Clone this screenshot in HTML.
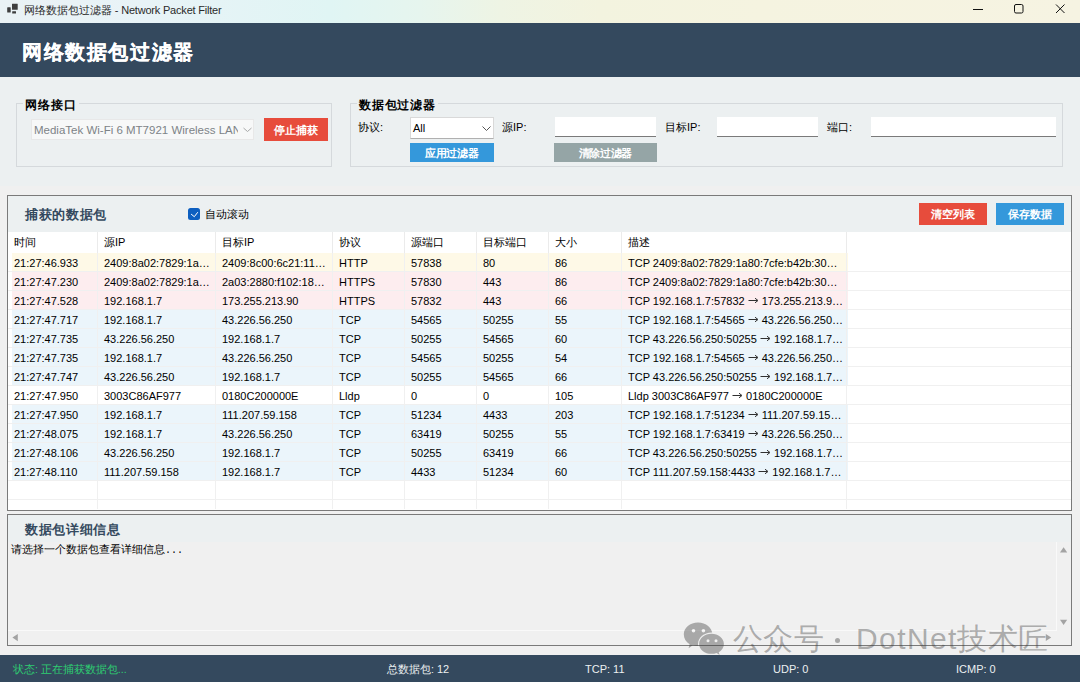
<!DOCTYPE html>
<html><head><meta charset="utf-8">
<style>
*{margin:0;padding:0;box-sizing:border-box}
html,body{width:1080px;height:682px;overflow:hidden}
body{position:relative;background:#f0f0f0;font-family:"Liberation Sans",sans-serif;color:#000}
.a{position:absolute;white-space:nowrap}
#tb{left:0;top:0;width:1080px;height:23px;background:linear-gradient(90deg,#eaf2f5 0px,#e8f3f7 150px,#e0f5f4 330px,#e6f5ee 420px,#eef4e4 500px,#f3f3df 600px,#f5f3e0 760px,#f6f3e2 1080px)}
#hdr{left:0;top:23px;width:1080px;height:54px;background:#34495e}
.gb{border:1px solid #d5d9dc}
.lbl{font-size:11px;line-height:14px}
.btn{color:#fff;font-size:11px;text-align:center;font-weight:bold;letter-spacing:-0.3px;text-indent:-0.3px}
.tbx{background:#fff;border-bottom:1px solid #7a7a7a}
#grid .row{position:absolute;left:12px;height:18px;font-size:11px;line-height:18px}
.gh{font-size:11px;line-height:14px;color:#000}
.gc{font-size:11px;line-height:18px;color:#000}
.arw{vertical-align:0}
.wm{font-size:30px;line-height:44px;color:rgba(60,60,60,0.4)}
#status{left:0;top:655px;width:1080px;height:27px;background:#34495e}
.st{font-size:11px;color:#ecf0f1;top:662px;line-height:14px}
</style></head><body>
<!-- title bar -->
<div id="tb" class="a"></div>
<svg class="a" style="left:0;top:0" width="20" height="16" viewBox="0 0 20 16">
<rect x="7.2" y="7.2" width="3.5" height="5.4" rx="0.6" fill="#3e3e3e"/><rect x="12" y="3.7" width="5.7" height="6" rx="0.3" fill="#3e3e3e"/><rect x="12.2" y="11.3" width="3.8" height="2.2" rx="0.3" fill="#3e3e3e"/>
</svg>
<div class="a" style="left:24px;top:3px;font-size:11px;line-height:15px;color:#2a2a2a">网络数据包过滤器<span style="letter-spacing:-0.2px"> - Network Packet Filter</span></div>
<svg class="a" style="left:960px;top:0" width="120" height="23" viewBox="0 0 120 23">
<line x1="13" y1="9.5" x2="23" y2="9.5" stroke="#111" stroke-width="1"/>
<rect x="54.5" y="4.5" width="8.5" height="8.5" rx="1.5" fill="none" stroke="#111" stroke-width="1"/>
<path d="M96 4.5 L104.5 13 M104.5 4.5 L96 13" stroke="#111" stroke-width="1"/>
</svg>
<!-- header -->
<div id="hdr" class="a"></div>
<div class="a" style="left:0;top:77px;width:1080px;height:109px;background:#ecf0f1"></div>
<div class="a" style="left:22px;top:38px;font-size:19.5px;line-height:28px;font-weight:bold;-webkit-text-stroke:0.25px #fff;color:#fff;letter-spacing:1.6px">网络数据包过滤器</div>

<!-- group 1 -->
<div class="a gb" style="left:16px;top:103px;width:316px;height:64px"></div>
<div class="a" style="left:23px;top:97px;background:#ecf0f1;padding:0 2px;font-size:12px;line-height:16px;font-weight:bold;letter-spacing:1.1px">网络接口</div>
<div class="a" style="left:31px;top:119px;width:223px;height:21px;background:#f7f8f8;border:1px solid #e8e8e8"></div>
<div class="a" style="left:34px;top:123px;font-size:11.5px;line-height:15px;color:#7d8387;width:204px;overflow:hidden">MediaTek Wi-Fi 6 MT7921 Wireless LAN</div>
<svg class="a" style="left:242px;top:126px" width="11" height="7" viewBox="0 0 11 7"><path d="M1.5 2 L5.5 5.5 L9.5 2" fill="none" stroke="#a8a8a8" stroke-width="1"/></svg>
<div class="a btn" style="left:264px;top:118px;width:64px;height:23px;line-height:24px;background:#e74c3c">停止捕获</div>

<!-- group 2 -->
<div class="a gb" style="left:350px;top:103px;width:713px;height:64px"></div>
<div class="a" style="left:357px;top:97px;background:#ecf0f1;padding:0 2px;font-size:12px;line-height:16px;font-weight:bold;letter-spacing:0.8px">数据包过滤器</div>
<div class="a lbl" style="left:358px;top:120px">协议:</div>
<div class="a" style="left:410px;top:117px;width:84px;height:22px;background:#fff;border:1px solid #d9d9d9;border-bottom-color:#b0b0b0"></div>
<div class="a lbl" style="left:413px;top:121px">All</div>
<svg class="a" style="left:481px;top:125px" width="11" height="7" viewBox="0 0 11 7"><path d="M1.5 1.5 L5.5 5.5 L9.5 1.5" fill="none" stroke="#555" stroke-width="1"/></svg>
<div class="a lbl" style="left:502px;top:120px">源IP:</div>
<div class="a tbx" style="left:555px;top:117px;width:101px;height:20px"></div>
<div class="a lbl" style="left:665px;top:120px">目标IP:</div>
<div class="a tbx" style="left:717px;top:117px;width:101px;height:20px"></div>
<div class="a lbl" style="left:827px;top:120px">端口:</div>
<div class="a tbx" style="left:871px;top:117px;width:185px;height:20px"></div>
<div class="a btn" style="left:410px;top:143px;width:84px;height:19px;line-height:20px;font-size:11px;font-weight:bold;background:#3498db">应用过滤器</div>
<div class="a btn" style="left:554px;top:143px;width:103px;height:19px;line-height:20px;font-size:11px;font-weight:bold;background:#95a5a6">清除过滤器</div>

<!-- packets panel -->
<div class="a" style="left:7px;top:195px;width:1065px;height:316px;border:1px solid #7a7a7a;background:#fff"></div>
<div class="a" style="left:8px;top:196px;width:1063px;height:36px;background:#ecf0f1"></div>
<div class="a" style="left:25px;top:206px;font-size:13px;letter-spacing:0.7px;line-height:17px;font-weight:bold;color:#34495e">捕获的数据包</div>
<div class="a" style="left:188px;top:208px;width:12px;height:12px;border-radius:2.5px;background:#0d5fc0"></div>
<svg class="a" style="left:188px;top:208px" width="12" height="12" viewBox="0 0 12 12"><path d="M3.1 6.1 L6.3 8.7 L9.8 4.2" fill="none" stroke="#fff" stroke-width="1"/></svg>
<div class="a" style="left:205px;top:207px;font-size:11px;line-height:14px">自动滚动</div>
<div class="a btn" style="left:919px;top:203px;width:68px;height:22px;line-height:23px;background:#e74c3c">清空列表</div>
<div class="a btn" style="left:996px;top:203px;width:68px;height:22px;line-height:23px;background:#3498db">保存数据</div>

<div id="grid">
<div class="a" style="left:8px;top:232px;width:1063px;height:21px;background:#fff"></div>
<div class="a gh" style="left:14px;top:235px">时间</div>
<div class="a gh" style="left:104px;top:235px">源IP</div>
<div class="a gh" style="left:222px;top:235px">目标IP</div>
<div class="a gh" style="left:339px;top:235px">协议</div>
<div class="a gh" style="left:411px;top:235px">源端口</div>
<div class="a gh" style="left:483px;top:235px">目标端口</div>
<div class="a gh" style="left:555px;top:235px">大小</div>
<div class="a gh" style="left:628px;top:235px">描述</div>
<div class="a" style="left:97px;top:232px;width:1px;height:21px;background:#ebebeb"></div>
<div class="a" style="left:215px;top:232px;width:1px;height:21px;background:#ebebeb"></div>
<div class="a" style="left:332px;top:232px;width:1px;height:21px;background:#ebebeb"></div>
<div class="a" style="left:404px;top:232px;width:1px;height:21px;background:#ebebeb"></div>
<div class="a" style="left:476px;top:232px;width:1px;height:21px;background:#ebebeb"></div>
<div class="a" style="left:548px;top:232px;width:1px;height:21px;background:#ebebeb"></div>
<div class="a" style="left:621px;top:232px;width:1px;height:21px;background:#ebebeb"></div>
<div class="a" style="left:846px;top:232px;width:1px;height:21px;background:#ebebeb"></div>
<div class="a" style="left:12px;top:253px;width:836px;height:18px;background:#fef9e7"></div>
<div class="a gc" style="left:14px;top:254px">21:27:46.933</div>
<div class="a gc" style="left:104px;top:254px">2409:8a02:7829:1a…</div>
<div class="a gc" style="left:222px;top:254px">2409:8c00:6c21:11…</div>
<div class="a gc" style="left:339px;top:254px">HTTP</div>
<div class="a gc" style="left:411px;top:254px">57838</div>
<div class="a gc" style="left:483px;top:254px">80</div>
<div class="a gc" style="left:555px;top:254px">86</div>
<div class="a gc" style="left:628px;top:254px">TCP 2409:8a02:7829:1a80:7cfe:b42b:30…</div>
<div class="a" style="left:12px;top:272px;width:836px;height:18px;background:#fdedef"></div>
<div class="a gc" style="left:14px;top:273px">21:27:47.230</div>
<div class="a gc" style="left:104px;top:273px">2409:8a02:7829:1a…</div>
<div class="a gc" style="left:222px;top:273px">2a03:2880:f102:18…</div>
<div class="a gc" style="left:339px;top:273px">HTTPS</div>
<div class="a gc" style="left:411px;top:273px">57830</div>
<div class="a gc" style="left:483px;top:273px">443</div>
<div class="a gc" style="left:555px;top:273px">86</div>
<div class="a gc" style="left:628px;top:273px">TCP 2409:8a02:7829:1a80:7cfe:b42b:30…</div>
<div class="a" style="left:12px;top:291px;width:836px;height:18px;background:#fdedef"></div>
<div class="a gc" style="left:14px;top:292px">21:27:47.528</div>
<div class="a gc" style="left:104px;top:292px">192.168.1.7</div>
<div class="a gc" style="left:222px;top:292px">173.255.213.90</div>
<div class="a gc" style="left:339px;top:292px">HTTPS</div>
<div class="a gc" style="left:411px;top:292px">57832</div>
<div class="a gc" style="left:483px;top:292px">443</div>
<div class="a gc" style="left:555px;top:292px">66</div>
<div class="a gc" style="left:628px;top:292px">TCP 192.168.1.7:57832 <svg class="arw" width="11" height="8" viewBox="0 0 11 8"><path d="M0.5 3.5 H9.3" stroke="#303030" stroke-width="1"/><path d="M7 1.2 L10 3.5 L7 5.8" fill="none" stroke="#303030" stroke-width="1"/></svg> 173.255.213.9…</div>
<div class="a" style="left:12px;top:310px;width:836px;height:18px;background:#ebf5fb"></div>
<div class="a gc" style="left:14px;top:311px">21:27:47.717</div>
<div class="a gc" style="left:104px;top:311px">192.168.1.7</div>
<div class="a gc" style="left:222px;top:311px">43.226.56.250</div>
<div class="a gc" style="left:339px;top:311px">TCP</div>
<div class="a gc" style="left:411px;top:311px">54565</div>
<div class="a gc" style="left:483px;top:311px">50255</div>
<div class="a gc" style="left:555px;top:311px">55</div>
<div class="a gc" style="left:628px;top:311px">TCP 192.168.1.7:54565 <svg class="arw" width="11" height="8" viewBox="0 0 11 8"><path d="M0.5 3.5 H9.3" stroke="#303030" stroke-width="1"/><path d="M7 1.2 L10 3.5 L7 5.8" fill="none" stroke="#303030" stroke-width="1"/></svg> 43.226.56.250…</div>
<div class="a" style="left:12px;top:329px;width:836px;height:18px;background:#ebf5fb"></div>
<div class="a gc" style="left:14px;top:330px">21:27:47.735</div>
<div class="a gc" style="left:104px;top:330px">43.226.56.250</div>
<div class="a gc" style="left:222px;top:330px">192.168.1.7</div>
<div class="a gc" style="left:339px;top:330px">TCP</div>
<div class="a gc" style="left:411px;top:330px">50255</div>
<div class="a gc" style="left:483px;top:330px">54565</div>
<div class="a gc" style="left:555px;top:330px">60</div>
<div class="a gc" style="left:628px;top:330px">TCP 43.226.56.250:50255 <svg class="arw" width="11" height="8" viewBox="0 0 11 8"><path d="M0.5 3.5 H9.3" stroke="#303030" stroke-width="1"/><path d="M7 1.2 L10 3.5 L7 5.8" fill="none" stroke="#303030" stroke-width="1"/></svg> 192.168.1.7…</div>
<div class="a" style="left:12px;top:348px;width:836px;height:18px;background:#ebf5fb"></div>
<div class="a gc" style="left:14px;top:349px">21:27:47.735</div>
<div class="a gc" style="left:104px;top:349px">192.168.1.7</div>
<div class="a gc" style="left:222px;top:349px">43.226.56.250</div>
<div class="a gc" style="left:339px;top:349px">TCP</div>
<div class="a gc" style="left:411px;top:349px">54565</div>
<div class="a gc" style="left:483px;top:349px">50255</div>
<div class="a gc" style="left:555px;top:349px">54</div>
<div class="a gc" style="left:628px;top:349px">TCP 192.168.1.7:54565 <svg class="arw" width="11" height="8" viewBox="0 0 11 8"><path d="M0.5 3.5 H9.3" stroke="#303030" stroke-width="1"/><path d="M7 1.2 L10 3.5 L7 5.8" fill="none" stroke="#303030" stroke-width="1"/></svg> 43.226.56.250…</div>
<div class="a" style="left:12px;top:367px;width:836px;height:18px;background:#ebf5fb"></div>
<div class="a gc" style="left:14px;top:368px">21:27:47.747</div>
<div class="a gc" style="left:104px;top:368px">43.226.56.250</div>
<div class="a gc" style="left:222px;top:368px">192.168.1.7</div>
<div class="a gc" style="left:339px;top:368px">TCP</div>
<div class="a gc" style="left:411px;top:368px">50255</div>
<div class="a gc" style="left:483px;top:368px">54565</div>
<div class="a gc" style="left:555px;top:368px">66</div>
<div class="a gc" style="left:628px;top:368px">TCP 43.226.56.250:50255 <svg class="arw" width="11" height="8" viewBox="0 0 11 8"><path d="M0.5 3.5 H9.3" stroke="#303030" stroke-width="1"/><path d="M7 1.2 L10 3.5 L7 5.8" fill="none" stroke="#303030" stroke-width="1"/></svg> 192.168.1.7…</div>
<div class="a" style="left:12px;top:386px;width:836px;height:18px;background:#ffffff"></div>
<div class="a gc" style="left:14px;top:387px">21:27:47.950</div>
<div class="a gc" style="left:104px;top:387px">3003C86AF977</div>
<div class="a gc" style="left:222px;top:387px">0180C200000E</div>
<div class="a gc" style="left:339px;top:387px">Lldp</div>
<div class="a gc" style="left:411px;top:387px">0</div>
<div class="a gc" style="left:483px;top:387px">0</div>
<div class="a gc" style="left:555px;top:387px">105</div>
<div class="a gc" style="left:628px;top:387px">Lldp 3003C86AF977 <svg class="arw" width="11" height="8" viewBox="0 0 11 8"><path d="M0.5 3.5 H9.3" stroke="#303030" stroke-width="1"/><path d="M7 1.2 L10 3.5 L7 5.8" fill="none" stroke="#303030" stroke-width="1"/></svg> 0180C200000E</div>
<div class="a" style="left:12px;top:405px;width:836px;height:18px;background:#ebf5fb"></div>
<div class="a gc" style="left:14px;top:406px">21:27:47.950</div>
<div class="a gc" style="left:104px;top:406px">192.168.1.7</div>
<div class="a gc" style="left:222px;top:406px">111.207.59.158</div>
<div class="a gc" style="left:339px;top:406px">TCP</div>
<div class="a gc" style="left:411px;top:406px">51234</div>
<div class="a gc" style="left:483px;top:406px">4433</div>
<div class="a gc" style="left:555px;top:406px">203</div>
<div class="a gc" style="left:628px;top:406px">TCP 192.168.1.7:51234 <svg class="arw" width="11" height="8" viewBox="0 0 11 8"><path d="M0.5 3.5 H9.3" stroke="#303030" stroke-width="1"/><path d="M7 1.2 L10 3.5 L7 5.8" fill="none" stroke="#303030" stroke-width="1"/></svg> 111.207.59.15…</div>
<div class="a" style="left:12px;top:424px;width:836px;height:18px;background:#ebf5fb"></div>
<div class="a gc" style="left:14px;top:425px">21:27:48.075</div>
<div class="a gc" style="left:104px;top:425px">192.168.1.7</div>
<div class="a gc" style="left:222px;top:425px">43.226.56.250</div>
<div class="a gc" style="left:339px;top:425px">TCP</div>
<div class="a gc" style="left:411px;top:425px">63419</div>
<div class="a gc" style="left:483px;top:425px">50255</div>
<div class="a gc" style="left:555px;top:425px">55</div>
<div class="a gc" style="left:628px;top:425px">TCP 192.168.1.7:63419 <svg class="arw" width="11" height="8" viewBox="0 0 11 8"><path d="M0.5 3.5 H9.3" stroke="#303030" stroke-width="1"/><path d="M7 1.2 L10 3.5 L7 5.8" fill="none" stroke="#303030" stroke-width="1"/></svg> 43.226.56.250…</div>
<div class="a" style="left:12px;top:443px;width:836px;height:18px;background:#ebf5fb"></div>
<div class="a gc" style="left:14px;top:444px">21:27:48.106</div>
<div class="a gc" style="left:104px;top:444px">43.226.56.250</div>
<div class="a gc" style="left:222px;top:444px">192.168.1.7</div>
<div class="a gc" style="left:339px;top:444px">TCP</div>
<div class="a gc" style="left:411px;top:444px">50255</div>
<div class="a gc" style="left:483px;top:444px">63419</div>
<div class="a gc" style="left:555px;top:444px">66</div>
<div class="a gc" style="left:628px;top:444px">TCP 43.226.56.250:50255 <svg class="arw" width="11" height="8" viewBox="0 0 11 8"><path d="M0.5 3.5 H9.3" stroke="#303030" stroke-width="1"/><path d="M7 1.2 L10 3.5 L7 5.8" fill="none" stroke="#303030" stroke-width="1"/></svg> 192.168.1.7…</div>
<div class="a" style="left:12px;top:462px;width:836px;height:18px;background:#ebf5fb"></div>
<div class="a gc" style="left:14px;top:463px">21:27:48.110</div>
<div class="a gc" style="left:104px;top:463px">111.207.59.158</div>
<div class="a gc" style="left:222px;top:463px">192.168.1.7</div>
<div class="a gc" style="left:339px;top:463px">TCP</div>
<div class="a gc" style="left:411px;top:463px">4433</div>
<div class="a gc" style="left:483px;top:463px">51234</div>
<div class="a gc" style="left:555px;top:463px">60</div>
<div class="a gc" style="left:628px;top:463px">TCP 111.207.59.158:4433 <svg class="arw" width="11" height="8" viewBox="0 0 11 8"><path d="M0.5 3.5 H9.3" stroke="#303030" stroke-width="1"/><path d="M7 1.2 L10 3.5 L7 5.8" fill="none" stroke="#303030" stroke-width="1"/></svg> 192.168.1.7…</div>
<div class="a" style="left:8px;top:271px;width:1063px;height:1px;background:#f0f0f0"></div>
<div class="a" style="left:8px;top:290px;width:1063px;height:1px;background:#f0f0f0"></div>
<div class="a" style="left:8px;top:309px;width:1063px;height:1px;background:#f0f0f0"></div>
<div class="a" style="left:8px;top:328px;width:1063px;height:1px;background:#f0f0f0"></div>
<div class="a" style="left:8px;top:347px;width:1063px;height:1px;background:#f0f0f0"></div>
<div class="a" style="left:8px;top:366px;width:1063px;height:1px;background:#f0f0f0"></div>
<div class="a" style="left:8px;top:385px;width:1063px;height:1px;background:#f0f0f0"></div>
<div class="a" style="left:8px;top:404px;width:1063px;height:1px;background:#f0f0f0"></div>
<div class="a" style="left:8px;top:423px;width:1063px;height:1px;background:#f0f0f0"></div>
<div class="a" style="left:8px;top:442px;width:1063px;height:1px;background:#f0f0f0"></div>
<div class="a" style="left:8px;top:461px;width:1063px;height:1px;background:#f0f0f0"></div>
<div class="a" style="left:8px;top:480px;width:1063px;height:1px;background:#f0f0f0"></div>
<div class="a" style="left:8px;top:499px;width:1063px;height:1px;background:#f0f0f0"></div>
<div class="a" style="left:97px;top:253px;width:1px;height:256px;background:#f0f0f0"></div>
<div class="a" style="left:215px;top:253px;width:1px;height:256px;background:#f0f0f0"></div>
<div class="a" style="left:332px;top:253px;width:1px;height:256px;background:#f0f0f0"></div>
<div class="a" style="left:404px;top:253px;width:1px;height:256px;background:#f0f0f0"></div>
<div class="a" style="left:476px;top:253px;width:1px;height:256px;background:#f0f0f0"></div>
<div class="a" style="left:548px;top:253px;width:1px;height:256px;background:#f0f0f0"></div>
<div class="a" style="left:621px;top:253px;width:1px;height:256px;background:#f0f0f0"></div>
<div class="a" style="left:846px;top:253px;width:1px;height:256px;background:#f0f0f0"></div>
</div>

<!-- details panel -->
<div class="a" style="left:7px;top:514px;width:1065px;height:132px;border:1px solid #7a7a7a;background:#f0f0f0"></div>
<div class="a" style="left:8px;top:515px;width:1063px;height:27px;background:#ecf0f1"></div>
<div class="a" style="left:25px;top:521px;font-size:13px;letter-spacing:0.7px;line-height:17px;font-weight:bold;color:#34495e">数据包详细信息</div>
<div class="a" style="left:11px;top:542px;font-size:11px;line-height:14px">请选择一个数据包查看详细信息<span style="font-family:'Liberation Mono',monospace;font-size:10px">...</span></div>


<!-- details scrollbars -->
<div class="a" style="left:1056px;top:542px;width:1px;height:89px;background:#f9f9f9"></div>
<div class="a" style="left:8px;top:630px;width:1049px;height:1px;background:#f9f9f9"></div>
<svg class="a" style="left:1056px;top:542px" width="15" height="103" viewBox="0 0 15 103">
<path d="M4 10.6 L7.6 5.2 L11.2 10.6 Z" fill="#a3a3a3"/>
<path d="M4 77.8 L7.6 83 L11.2 77.8 Z" fill="#a3a3a3"/>
</svg>
<svg class="a" style="left:8px;top:630px" width="1049" height="15" viewBox="0 0 1049 15">
<path d="M4.4 7.6 L9.8 4 L9.8 11.2 Z" fill="#a3a3a3"/>
<path d="M1037.8 4 L1043.2 7.5 L1037.8 11 Z" fill="#a3a3a3"/>
</svg>

<!-- watermark -->
<svg class="a" style="left:680px;top:618px" width="48" height="40" viewBox="680 618 48 40">
<defs><mask id="m1" maskUnits="userSpaceOnUse" x="680" y="618" width="48" height="40">
<rect x="680" y="618" width="48" height="40" fill="#fff"/>
<path d="M711.5 632.6 C718.9 632.6 725 637.7 725 643.9 C725 650.1 718.9 655 711.5 655 C704.1 655 698 650.1 698 643.9 C698 637.7 704.1 632.6 711.5 632.6 Z" fill="#000"/>
<circle cx="693.5" cy="630.8" r="1.8" fill="#000"/><circle cx="703.4" cy="630.8" r="1.8" fill="#000"/>
</mask>
<mask id="m2" maskUnits="userSpaceOnUse" x="680" y="618" width="48" height="40">
<rect x="680" y="618" width="48" height="40" fill="#fff"/>
<circle cx="708" cy="640.7" r="1.5" fill="#000"/><circle cx="716" cy="640.7" r="1.5" fill="#000"/>
</mask></defs>
<path mask="url(#m1)" fill="rgba(60,60,60,0.4)" d="M698 622.6 C706 622.6 712.3 627.8 712.3 634.3 C712.3 640.8 706 646 698 646 C696 646 694.3 645.7 692.8 645.2 L688.6 648.2 L689.6 644.2 C686 642 683.8 638.4 683.8 634.3 C683.8 627.8 690 622.6 698 622.6 Z"/>
<path mask="url(#m2)" fill="rgba(60,60,60,0.4)" d="M711.5 633.8 C718.3 633.8 723.9 638.3 723.9 643.9 C723.9 647.4 721.8 650.4 718.7 652.2 L719.6 655 L716.6 652.9 C715 653.5 713.3 653.8 711.5 653.8 C704.6 653.8 699.1 649.4 699.1 643.9 C699.1 638.3 704.6 633.8 711.5 633.8 Z"/>
</svg>
<div class="a wm" style="left:733px;top:617px;letter-spacing:0.3px">公众号</div>
<div class="a" style="left:835px;top:637.5px;width:5px;height:5px;border-radius:50%;background:rgba(60,60,60,0.4)"></div>
<div class="a wm" style="left:856px;top:617px;letter-spacing:1.4px">DotNet</div>
<div class="a wm" style="left:957px;top:617px;letter-spacing:0.6px">技术匠</div>
<!-- status -->
<div id="status" class="a"></div>
<div class="a st" style="left:13px;color:#2ecc71;font-size:10.5px">状态: 正在捕获数据包...</div>
<div class="a st" style="left:387px"><span style="font-size:10.5px">总数据包:</span> 12</div>
<div class="a st" style="left:585px">TCP: 11</div>
<div class="a st" style="left:773px">UDP: 0</div>
<div class="a st" style="left:956px">ICMP: 0</div>
</body></html>
